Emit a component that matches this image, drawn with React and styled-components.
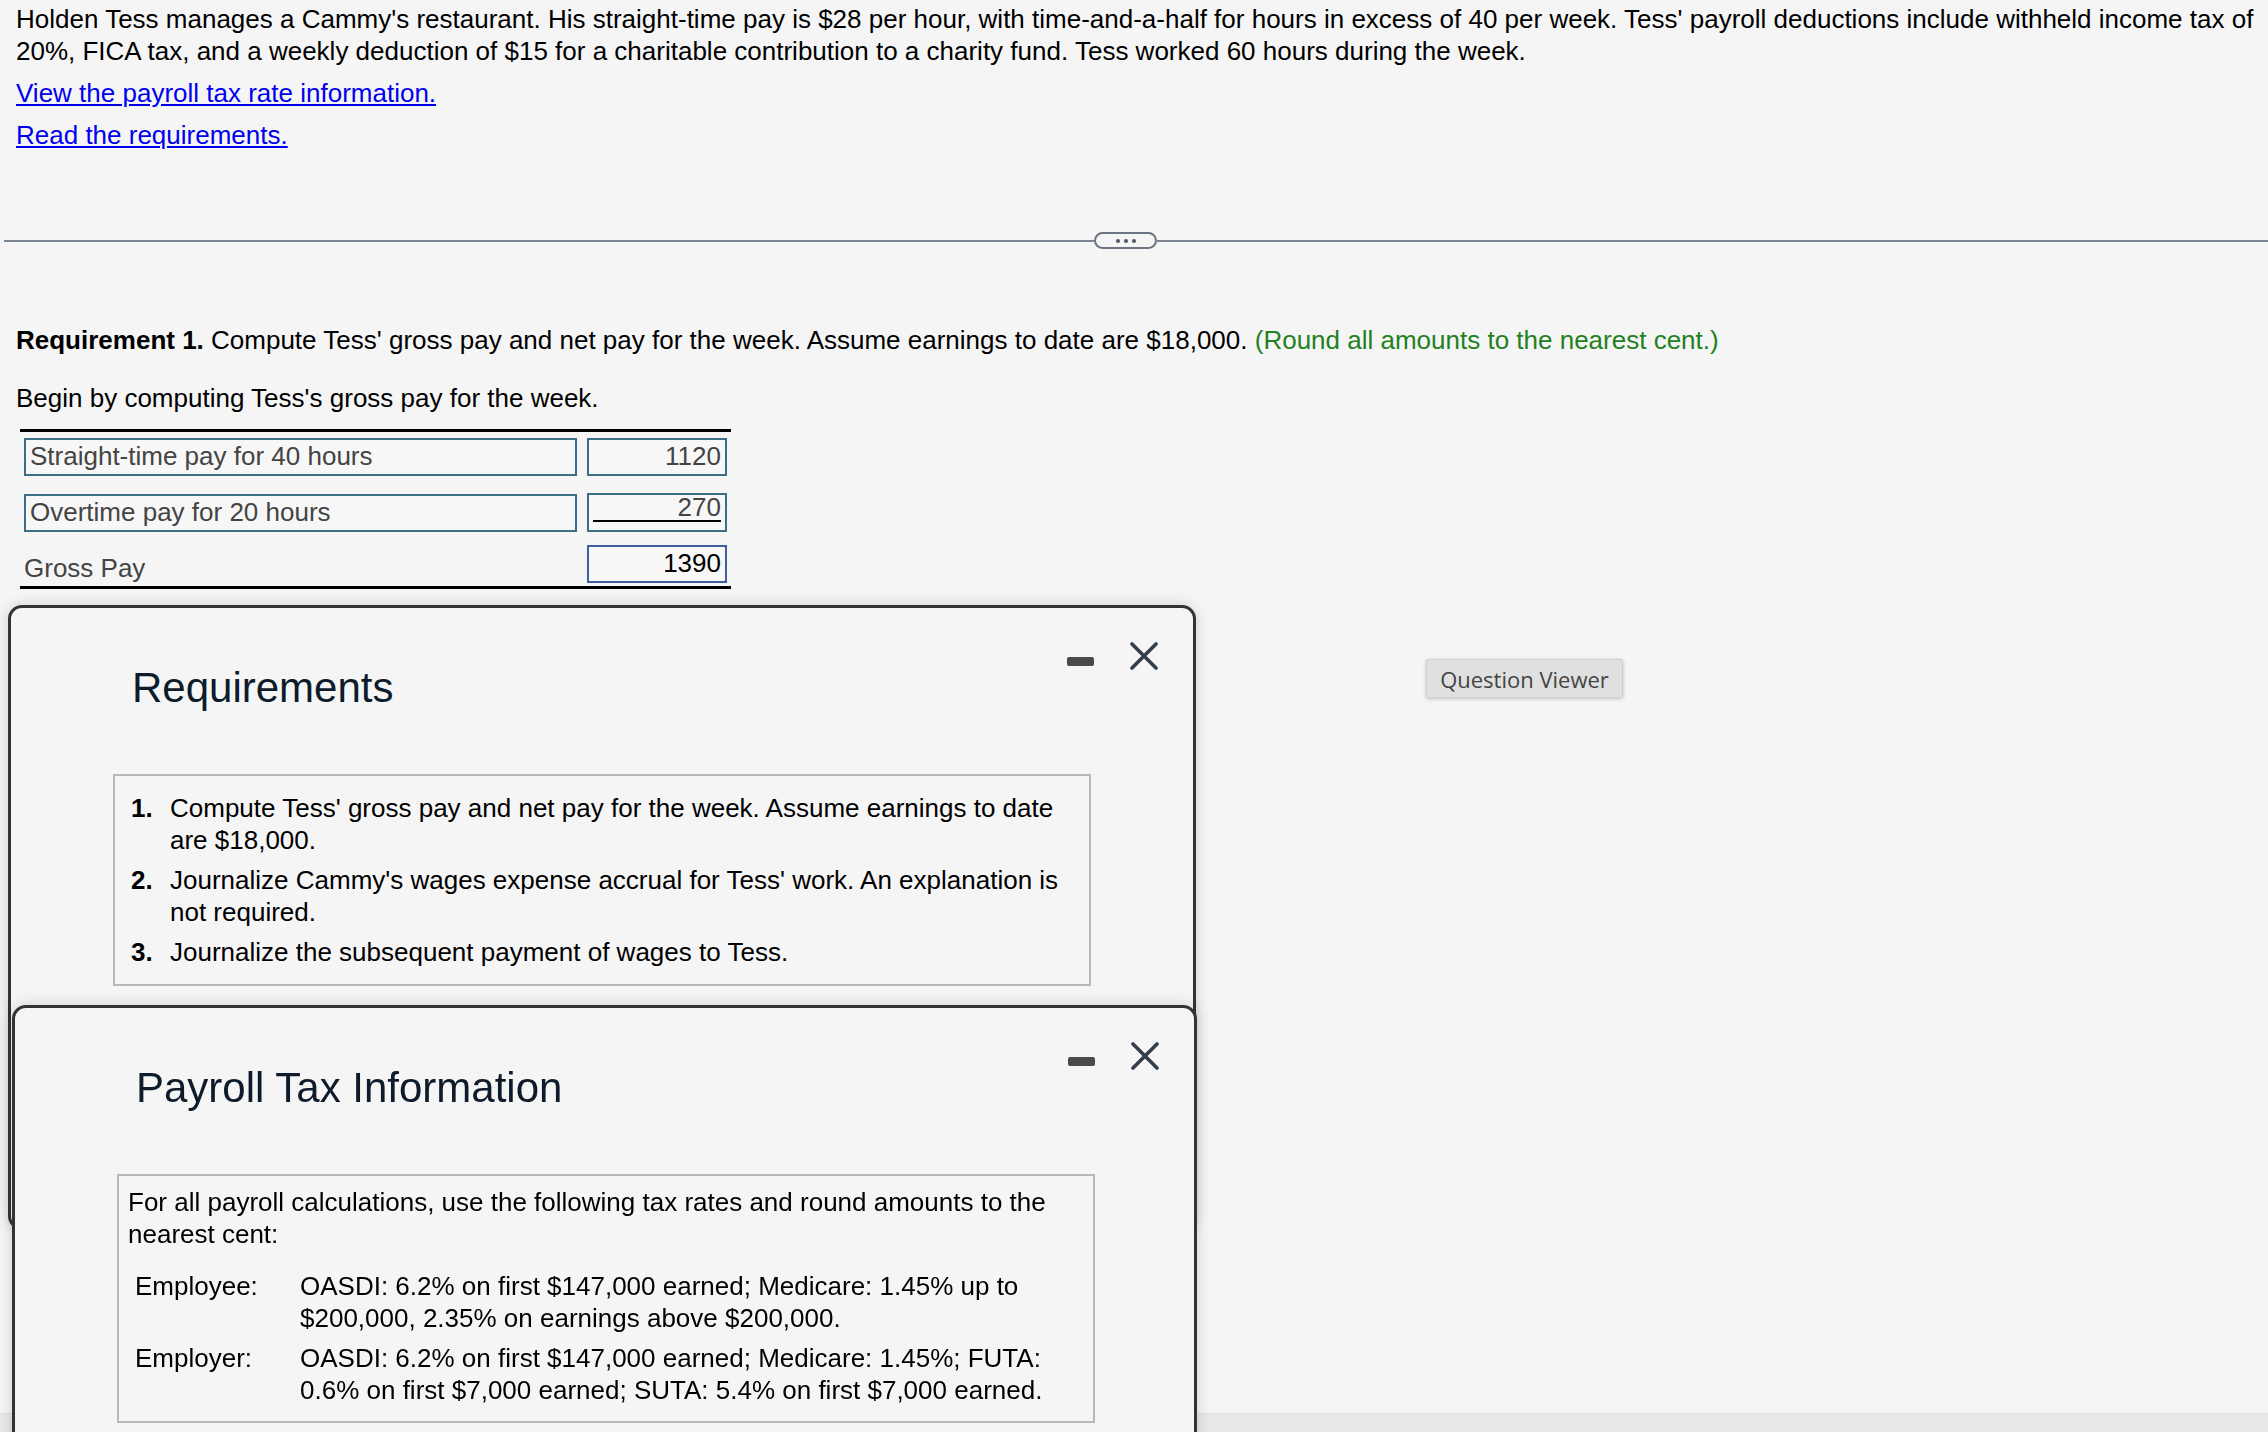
import React from 'react'
import styled, { createGlobalStyle } from 'styled-components'

const GlobalStyle = createGlobalStyle`
  html, body {
    margin: 0;
    padding: 0;
    overflow: hidden;
    background: #f5f5f5;
  }
  body {
    font-family: "Liberation Sans", Arial, Helvetica, sans-serif;
    font-size: 26px;
    color: #000;
  }
`

const requirements = [
  "Compute Tess' gross pay and net pay for the week. Assume earnings to date are $18,000.",
  "Journalize Cammy's wages expense accrual for Tess' work. An explanation is not required.",
  "Journalize the subsequent payment of wages to Tess.",
]

const taxRows = [
  {
    who: 'Employee:',
    text: 'OASDI: 6.2% on first $147,000 earned; Medicare: 1.45% up to $200,000, 2.35% on earnings above $200,000.',
  },
  {
    who: 'Employer:',
    text: 'OASDI: 6.2% on first $147,000 earned; Medicare: 1.45%; FUTA: 0.6% on first $7,000 earned; SUTA: 5.4% on first $7,000 earned.',
  },
]

const CloseIcon = () => (
  <svg width="28" height="28" viewBox="0 0 28 28">
    <path d="M2 2 L26 26 M26 2 L2 26" stroke="#333e49" strokeWidth="3.6" strokeLinecap="round" fill="none" />
  </svg>
)

const Window = ({ title, top, left, width, height, children }) => (
  <StyledWindow $top={top} $left={left} $width={width} $height={height}>
    <WindowHeader>
      <WindowTitle>{title}</WindowTitle>
      <WindowControls>
        <MinimizeBar />
        <CloseIcon />
      </WindowControls>
    </WindowHeader>
    <WindowBody>{children}</WindowBody>
  </StyledWindow>
)

const App = () => (
  <Root>
    <GlobalStyle />
    <Intro>
      <Problem>
        Holden Tess manages a Cammy's restaurant. His straight-time pay is $28 per hour, with time-and-a-half for hours in excess of 40 per week. Tess' payroll deductions include withheld income tax of 20%, FICA tax, and a weekly deduction of $15 for a charitable contribution to a charity fund. Tess worked 60 hours during the week.
      </Problem>
      <LinkLine><a href="#tax">View the payroll tax rate information.</a></LinkLine>
      <LinkLine><a href="#req">Read the requirements.</a></LinkLine>
    </Intro>

    <DividerRow>
      <DividerLine $w="1090px" />
      <Pill>
        <Dot /><Dot /><Dot />
      </Pill>
      <DividerLine />
    </DividerRow>

    <Question>
      <ReqLine>
        <b>Requirement 1.</b> Compute Tess' gross pay and net pay for the week. Assume earnings to date are $18,000.{' '}
        <Hint>(Round all amounts to the nearest cent.)</Hint>
      </ReqLine>
      <Lead>Begin by computing Tess's gross pay for the week.</Lead>

      <PayTable>
        <PayRow $mt="5px">
          <LabelBox>Straight-time pay for 40 hours</LabelBox>
          <ValueBox>1120</ValueBox>
        </PayRow>
        <PayRow $mt="17px">
          <LabelBox>Overtime pay for 20 hours</LabelBox>
          <ValueBox $sub>
            <Underlined>270</Underlined>
          </ValueBox>
        </PayRow>
        <PayRow $mt="11px">
          <PlainLabel>Gross Pay</PlainLabel>
          <ValueBox $total>1390</ValueBox>
        </PayRow>
      </PayTable>
    </Question>

    <ViewerButton>Question Viewer</ViewerButton>

    <Window title="Requirements" top={605} left={8} width={1188} height={625}>
      <ContentBox>
        <ReqList>
          {requirements.map((r, i) => (
            <ReqItem key={i}>
              <Num>{i + 1}.</Num>
              <span>{r}</span>
            </ReqItem>
          ))}
        </ReqList>
      </ContentBox>
    </Window>

    <Window title="Payroll Tax Information" top={1005} left={12} width={1185} height={700}>
      <ContentBox $info>
        <InfoText>
          For all payroll calculations, use the following tax rates and round amounts to the nearest cent:
        </InfoText>
        <TaxGrid>
          {taxRows.map((t) => (
            <React.Fragment key={t.who}>
              <span>{t.who}</span>
              <span>{t.text}</span>
            </React.Fragment>
          ))}
        </TaxGrid>
      </ContentBox>
    </Window>

    <BottomBand />
  </Root>
)

const Root = styled.div`
  position: relative;
  height: 100vh;
  overflow: hidden;
`

const Intro = styled.div`
  padding: 3px 8px 0 16px;
`

const Problem = styled.p`
  margin: 0;
  line-height: 32px;
`

const LinkLine = styled.p`
  margin: 10px 0 0;
  line-height: 32px;
  a {
    color: #0000ee;
    text-decoration: underline;
  }
`

const DividerRow = styled.div`
  display: flex;
  align-items: center;
  height: 17px;
  margin: 81px 0 0 4px;
`

const DividerLine = styled.div`
  height: 2px;
  background: #7d8591;
  flex: ${(p) => (p.$w ? `0 0 ${p.$w}` : '1')};
`

const Pill = styled.div`
  box-sizing: border-box;
  width: 63px;
  height: 17px;
  border: 2px solid #6b7480;
  border-radius: 9px;
  background: #f5f5f5;
  display: flex;
  align-items: center;
  justify-content: center;
  gap: 4px;
`

const Dot = styled.span`
  width: 4px;
  height: 4px;
  border-radius: 50%;
  background: #4b5563;
`

const Question = styled.div`
  padding-left: 16px;
`

const ReqLine = styled.p`
  margin: 75px 0 0;
  line-height: 32px;
`

const Hint = styled.span`
  color: #23801f;
`

const Lead = styled.p`
  margin: 26px 0 0;
  line-height: 32px;
`

const PayTable = styled.div`
  box-sizing: border-box;
  width: 711px;
  margin: 15px 0 0 4px;
  padding: 0 4px 4px 4px;
  border-top: 3px solid #000;
  border-bottom: 3px solid #000;
`

const PayRow = styled.div`
  display: grid;
  grid-template-columns: 553px 140px;
  column-gap: 10px;
  align-items: center;
  height: 39px;
  margin-top: ${(p) => p.$mt};
`

const LabelBox = styled.div`
  box-sizing: border-box;
  height: 38px;
  border: 2px solid #3b6f86;
  background: #f7f7f7;
  color: #444;
  padding-left: 4px;
  line-height: 33px;
`

const PlainLabel = styled.div`
  color: #444;
  line-height: 34px;
  padding-top: 8px;
`

const ValueBox = styled.div`
  box-sizing: border-box;
  height: ${(p) => (p.$sub ? '39px' : '38px')};
  border: 2px solid ${(p) => (p.$total ? '#3d5fa0' : '#3b6f86')};
  background: #f7f7f7;
  color: ${(p) => (p.$total ? '#000' : '#444')};
  text-align: right;
  padding: ${(p) => (p.$sub ? '0 4px' : '0 4px 0 0')};
  line-height: 33px;
`

const Underlined = styled.div`
  line-height: 25px;
  border-bottom: 2px solid #000;
`

const ViewerButton = styled.button`
  position: absolute;
  top: 659px;
  left: 1426px;
  width: 197px;
  height: 39px;
  background: #e0e0e0;
  border: 1px solid #d0d0d0;
  border-radius: 2px;
  box-shadow: 0 1px 4px rgba(0, 0, 0, 0.2);
  color: #444;
  font-family: "Open Sans", "Liberation Sans", sans-serif;
  font-size: 22px;
  padding: 0;
`

const StyledWindow = styled.div`
  position: absolute;
  top: ${(p) => p.$top}px;
  left: ${(p) => p.$left}px;
  width: ${(p) => p.$width}px;
  height: ${(p) => p.$height}px;
  box-sizing: border-box;
  border: 3px solid #333;
  border-radius: 14px;
  background: #f5f5f5;
  box-shadow: 0 0 14px rgba(0, 0, 0, 0.16);
  z-index: 2;
`

const WindowHeader = styled.div`
  display: flex;
  justify-content: space-between;
  align-items: flex-start;
  padding: 34px 35px 0 121px;
`

const WindowTitle = styled.h2`
  margin: 22px 0 0;
  font-size: 42px;
  line-height: 48px;
  font-weight: 400;
  color: #0d1b2a;
`

const WindowControls = styled.div`
  display: flex;
  align-items: flex-start;
  gap: 36px;
`

const MinimizeBar = styled.span`
  display: block;
  width: 27px;
  height: 9px;
  margin-top: 15px;
  border-radius: 2px;
  background: #4a4a4a;
`

const WindowBody = styled.div`
  padding: 62px 0 0 102px;
`

const ContentBox = styled.div`
  box-sizing: border-box;
  width: 978px;
  border: 2px solid #b8b8b8;
  padding: ${(p) => (p.$info ? '10px 14px 15px 9px' : '16px 14px 16px 16px')};
`

const ReqList = styled.ol`
  margin: 0;
  padding: 0;
  list-style: none;
  display: flex;
  flex-direction: column;
  gap: 8px;
`

const ReqItem = styled.li`
  display: flex;
  line-height: 32px;
`

const Num = styled.span`
  flex: 0 0 39px;
  font-weight: 700;
`

const InfoText = styled.p`
  margin: 0;
  line-height: 32px;
`

const TaxGrid = styled.div`
  display: grid;
  grid-template-columns: 165px 1fr;
  row-gap: 8px;
  margin: 20px 0 0 7px;
  line-height: 32px;
`

const BottomBand = styled.div`
  position: fixed;
  left: 0;
  right: 0;
  bottom: 0;
  height: 18px;
  background: #e8e8e8;
  border-top: 1px solid #dedede;
  z-index: 1;
`

export default App
